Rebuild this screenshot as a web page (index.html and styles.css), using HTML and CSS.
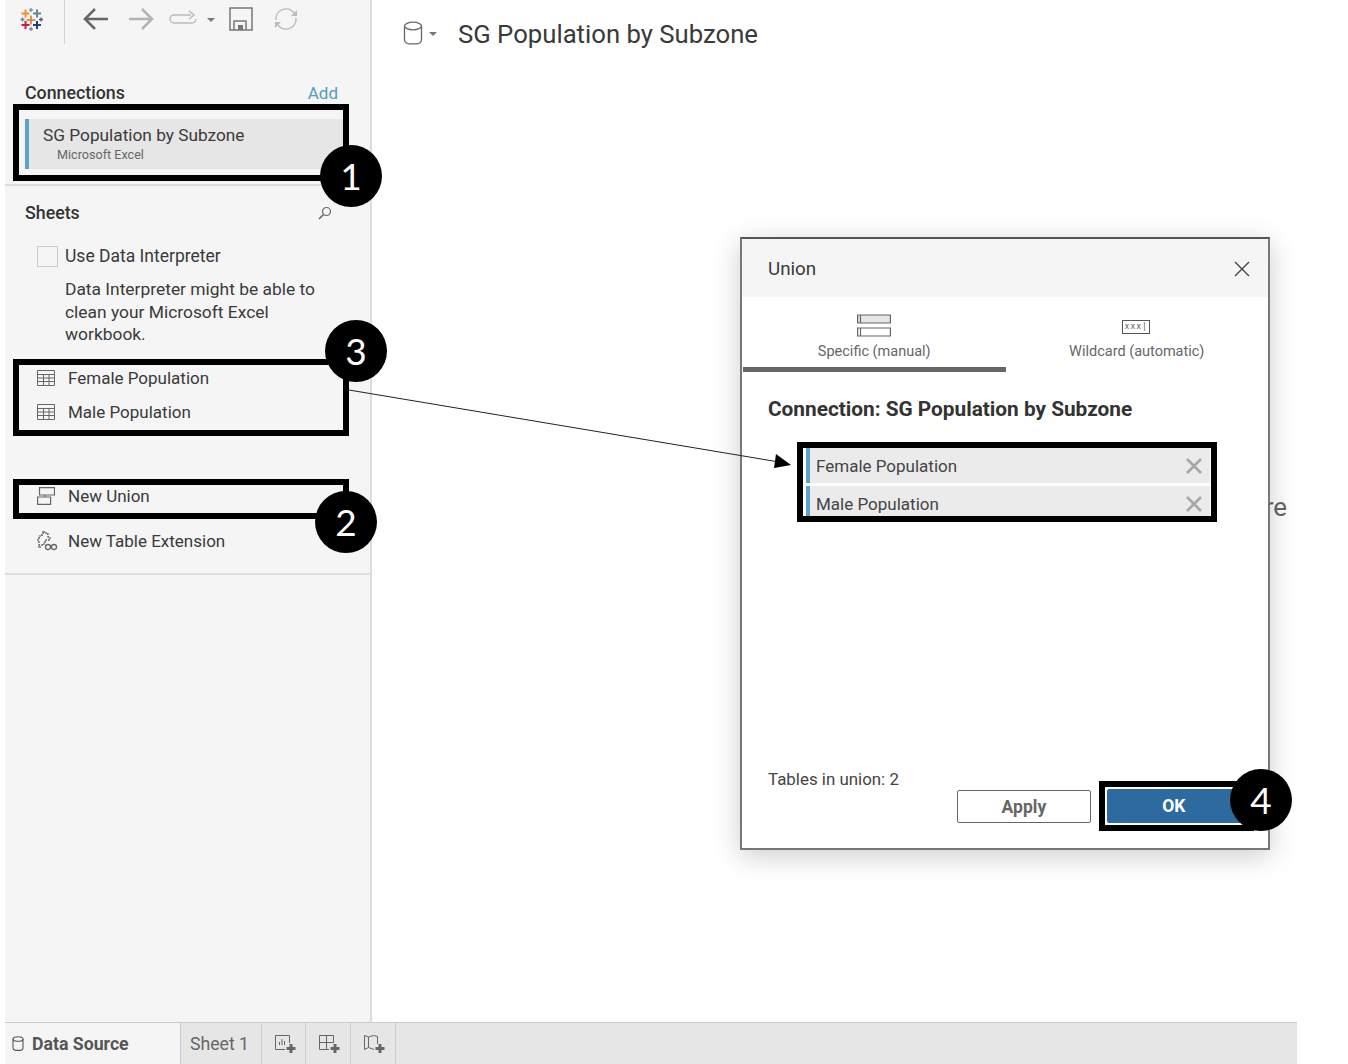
FILE: index.html
```html
<!DOCTYPE html>
<html lang="en">
<head>
    <meta charset="UTF-8">
    <meta name="viewport" content="width=device-width, initial-scale=1.0">
    <title>SG Population by Subzone</title>
    <link rel="stylesheet" href="styles.css">
</head>
<body>
    <div class="app">
        <div class="main">
            <!-- Left pane -->
            <aside class="sidebar">
                <div class="toolbar">
                    <svg class="logo" width="30" height="30" viewBox="0 0 30 30" fill="none" stroke-width="2">
                        <path d="M15 10.500v9M10.500 15h9" stroke="#e8762c" stroke-width="1.600"/>
                        <path d="M9.500 4.500v8M5.500 8.500h8" stroke="#f28e2b"/>
                        <path d="M21 4.500v8M17 8.500h8" stroke="#5b879b"/>
                        <path d="M9.500 16v8M5.500 20h8" stroke="#c72037"/>
                        <path d="M21 16v8M17 20h8" stroke="#1f447d"/>
                        <path d="M15 3v4M13 5h4" stroke="#7099a6" stroke-width="1.300"/>
                        <path d="M6.500 12.500v4M4.500 14.500h4" stroke="#5b879b" stroke-width="1.300"/>
                        <path d="M25 12.500v4M23 14.500h4" stroke="#59507f" stroke-width="1.300"/>
                        <path d="M15 22v4M13 24h4" stroke="#7b83b0" stroke-width="1.300"/>
                    </svg>
                    <span class="toolbar-divider"></span>
                    <svg class="tool-back" width="26" height="26" viewBox="0 0 26 26" fill="none" stroke="#666" stroke-width="2.500"><path d="M2 13h23M12 3L2 13l10 10"/></svg>
                    <svg class="tool-forward" width="26" height="26" viewBox="0 0 26 26" fill="none" stroke="#b3b3b3" stroke-width="2.500"><path d="M1 13h23M14 3l10 10-10 10"/></svg>
                    <svg class="tool-redo" width="30" height="20" viewBox="0 0 30 20" fill="none" stroke="#bbb" stroke-width="1.500"><path d="M22 6H5a4 4 0 0 0 0 8h18a4 4 0 0 0 4-4M20 2l5 4-5 4"/></svg>
                    <span class="caret"></span>
                    <svg class="tool-save" width="24" height="24" viewBox="0 0 24 24" fill="none" stroke="#777" stroke-width="1.500"><path d="M1 1h22v22H1zM5 23V14h12v9"/><path d="M9 18h5v5H9z" fill="#777" stroke="none"/></svg>
                    <svg class="tool-refresh" width="26" height="26" viewBox="0 0 26 26" fill="none" stroke="#bbb" stroke-width="1.500"><path d="M3 14a10 10 0 0 1 18-7M23 12a10 10 0 0 1-18 7"/><path d="M24 4v6h-6z" fill="#bbb" stroke="none"/><path d="M2 22v-6h6z" fill="#bbb" stroke="none"/></svg>
                </div>

                <div class="section-head connections-head">
                    <h2>Connections</h2>
                    <a class="add-link">Add</a>
                </div>
                <div class="connection">
                    <div class="connection-name">SG Population by Subzone</div>
                    <div class="connection-type">Microsoft Excel</div>
                </div>

                <div class="sheets">
                    <div class="section-head">
                        <h2>Sheets</h2>
                        <svg width="14" height="14" viewBox="0 0 14 14" fill="none" stroke="#666" stroke-width="1.200"><circle cx="8.500" cy="5.500" r="4"/><path d="M5.500 8.500L1 13" stroke-width="1.600"/></svg>
                    </div>
                    <div class="interpreter">
                        <span class="checkbox"></span>
                        <span>Use Data Interpreter</span>
                    </div>
                    <p class="interpreter-note">Data Interpreter might be able to clean your Microsoft Excel workbook.</p>
                    <ul class="sheet-list">
                        <li>
                            <svg width="18" height="16" viewBox="0 0 18 16" fill="none" stroke="#666"><path d="M.5.500h17v15H.5zM.5 4.500h17M.5 8h17M.5 11.500h17M6.500 4.500v11M12 4.500v11"/></svg>
                            Female Population
                        </li>
                        <li>
                            <svg width="18" height="16" viewBox="0 0 18 16" fill="none" stroke="#666"><path d="M.5.500h17v15H.5zM.5 4.500h17M.5 8h17M.5 11.500h17M6.500 4.500v11M12 4.500v11"/></svg>
                            Male Population
                        </li>
                    </ul>
                    <ul class="sheet-list sheet-actions">
                        <li>
                            <svg width="18" height="18" viewBox="0 0 18 18" fill="none" stroke="#666" stroke-width="1.200"><path d="M2.500.600h15v7.400h-15zM.6 10h13v7.400H.6zM8 8v2"/></svg>
                            New Union
                        </li>
                        <li class="extension">
                            <svg width="21" height="20" viewBox="0 0 21 20" fill="none" stroke="#666" stroke-width="1.300"><path d="M6 1h3v2h2v3h2v3H9v2H7v3H2v-3H1V7h2V4h3z" stroke-dasharray="2 1"/><circle cx="11" cy="16" r="2.500"/><circle cx="17" cy="16" r="2.500"/><path d="M1 16h3"/></svg>
                            New Table Extension
                        </li>
                    </ul>
                </div>
            </aside>

            <!-- Canvas -->
            <section class="canvas">
                <header class="canvas-head">
                    <svg class="db-icon" width="20" height="24" viewBox="0 0 20 24" fill="none" stroke="#666" stroke-width="1.300"><ellipse cx="10" cy="5" rx="8.500" ry="3.800"/><path d="M1.500 5v14c0 2.500 3 3.800 4 3.800h9c1 0 4-1.300 4-3.800V5"/></svg>
                    <span class="caret"></span>
                    <h1>SG Population by Subzone</h1>
                </header>
                <span class="drop-hint">Drag tables here</span>
            </section>
        </div>

        <!-- Sheet tabs -->
        <footer class="tabs">
            <div class="tab tab-source">
                <svg width="12" height="15" viewBox="0 0 12 15" fill="none" stroke="#555" stroke-width="1.100"><ellipse cx="6" cy="3" rx="5" ry="2.300"/><path d="M1 3v9c0 1.500 2 2.400 2.500 2.400h5c.5 0 2.500-.900 2.500-2.400V3"/></svg>
                Data Source
            </div>
            <div class="tab tab-sheet">Sheet 1</div>
            <div class="tab tab-icon tab-icon-first">
                <svg width="22" height="20" viewBox="0 0 22 20" fill="none" stroke="#666"><path d="M11 15.500H1.500v-14h14V9M5.500 11V8M8 11V5M10.500 11V7"/><path d="M17 10v9M12.500 14.500h9" stroke-width="3"/></svg>
            </div>
            <div class="tab tab-icon">
                <svg width="22" height="20" viewBox="0 0 22 20" fill="none" stroke="#666"><path d="M11 15.500H1.500v-14h14V9M8.500 1.500v14M1.500 8.500h14"/><path d="M17 10v9M12.500 14.500h9" stroke-width="3"/></svg>
            </div>
            <div class="tab tab-icon">
                <svg width="22" height="20" viewBox="0 0 22 20" fill="none" stroke="#666"><path d="M11 15.500L5.500 13.500 1.500 15.500v-14l4 1.500 5-1.500 4 1v7.500M5.500 3v10.500"/><path d="M17 10v9M12.500 14.500h9" stroke-width="3"/></svg>
            </div>
        </footer>

        <!-- Union dialog -->
        <div class="dialog">
            <div class="dialog-head">
                <span>Union</span>
                <svg width="16" height="16" viewBox="0 0 16 16" stroke="#444" stroke-width="1.400"><path d="M1 1l14 14M15 1L1 15"/></svg>
            </div>
            <div class="dialog-tabs">
                <div class="dialog-tab active">
                    <svg width="34" height="24" viewBox="0 0 34 24" fill="none" stroke="#666" stroke-width="1.200"><path d="M.6 1h32.800v8H.6z" fill="#e6e6e6"/><path d="M.6 14h32.800v8H.6zM3.500 1v8M3.500 14v8"/></svg>
                    <span>Specific (manual)</span>
                </div>
                <div class="dialog-tab">
                    <div class="wildcard-icon">xxx|</div>
                    <span>Wildcard (automatic)</span>
                </div>
            </div>
            <h3 class="dialog-title">Connection: SG Population by Subzone</h3>
            <div class="union-list">
                <div class="union-row">
                    <span>Female Population</span>
                    <svg width="16" height="16" viewBox="0 0 16 16" stroke="#a6a6a6" stroke-width="2.600"><path d="M1 1l14 14M15 1L1 15"/></svg>
                </div>
                <div class="union-row">
                    <span>Male Population</span>
                    <svg width="16" height="16" viewBox="0 0 16 16" stroke="#a6a6a6" stroke-width="2.600"><path d="M1 1l14 14M15 1L1 15"/></svg>
                </div>
            </div>
            <div class="dialog-foot">
                <span class="union-count">Tables in union: 2</span>
                <button class="btn">Apply</button>
                <button class="btn btn-primary">OK</button>
            </div>
        </div>

        <!-- Tutorial annotations drawn on top of the screenshot -->
        <div class="mark mark-connection"></div>
        <div class="mark mark-sheets"></div>
        <div class="mark mark-union"></div>
        <div class="mark mark-rows"></div>
        <div class="mark mark-ok"></div>
        <svg class="arrow" width="450" height="90" viewBox="0 0 450 90" fill="none">
            <path d="M0 1L430 73" stroke="#222" stroke-width="1"/>
            <path d="M442 76L427 65 425 79z" fill="#000"/>
        </svg>
        <div class="step step-1">1</div>
        <div class="step step-2">2</div>
        <div class="step step-3">3</div>
        <div class="step step-4">4</div>
    </div>
</body>
</html>
```

FILE: styles.css
```css
* {
    box-sizing: border-box;
}
body {
    margin: 0;
    background-color: #fff;
    font-family: Roboto, "Liberation Sans", sans-serif;
    color: #3a3a3a;
}
h1, h2, h3, p, ul {
    margin: 0;
    padding: 0;
}
ul {
    list-style: none;
}
svg {
    display: block;
    flex: none;
}
.app {
    position: relative;
    width: 1348px;
    height: 1064px;
    padding-left: 5px;
    overflow: hidden;
    display: flex;
    flex-direction: column;
}
.main {
    height: 1022px;
    display: flex;
}

/* Left pane */
.sidebar {
    width: 367px;
    background-color: #f5f5f5;
    border-right: 2px solid #ddd;
}
.toolbar {
    height: 45px;
    display: flex;
    align-items: flex-start;
}
.logo {
    margin: 5px 0 0 11px;
}
.toolbar-divider {
    width: 1px;
    height: 44px;
    margin-left: 18px;
    background-color: #d4d4d4;
}
.tool-back {
    margin: 6px 0 0 18px;
}
.tool-forward {
    margin: 6px 0 0 19px;
}
.tool-redo {
    margin: 9px 0 0 15px;
}
.toolbar .caret {
    margin: 18px 0 0 8px;
}
.tool-save {
    margin: 7px 0 0 14px;
}
.tool-refresh {
    margin: 6px 0 0 20px;
}
.caret {
    width: 0;
    height: 0;
    border-left: 4px solid transparent;
    border-right: 4px solid transparent;
    border-top: 4px solid #777;
}
.section-head {
    display: flex;
    justify-content: space-between;
    align-items: center;
    padding: 0 32px 0 20px;
}
.section-head h2 {
    font-size: 17.800px;
    font-weight: 500;
    color: #333;
}
.connections-head {
    height: 24px;
    margin-top: 35px;
}
.add-link {
    margin-top: 2px;
    font-size: 17px;
    color: #4f9fc4;
}
.connection {
    height: 50px;
    margin: 15px 25px 0 20px;
    padding: 6px 0 0 14px;
    background-color: #e6e6e6;
    border-left: 4px solid #5ba4c9;
}
.connection-name {
    font-size: 17.250px;
    line-height: 21px;
}
.connection-type {
    margin: 1px 0 0 14px;
    font-size: 12.600px;
    line-height: 16px;
    color: #666;
}
.sheets {
    height: 391px;
    margin-top: 15px;
    padding-top: 16px;
    border-top: 2px solid #ddd;
    border-bottom: 2px solid #ddd;
}
.sheets .section-head h2 {
    line-height: 22px;
}
.sheets .section-head {
    padding-right: 38px;
}
.interpreter {
    display: flex;
    align-items: center;
    gap: 7px;
    margin: 21px 0 0 32px;
    font-size: 17.500px;
    line-height: 22px;
}
.checkbox {
    width: 21px;
    height: 21px;
    border: 1px solid #ccc;
}
.interpreter-note {
    width: 280px;
    margin: 11px 0 0 60px;
    font-size: 17.400px;
    line-height: 22.500px;
}
.sheet-list {
    margin: 15px 0 0 32px;
    font-size: 17px;
}
.sheet-list li {
    height: 34px;
    display: flex;
    align-items: center;
    gap: 13px;
}
.sheet-actions {
    margin-top: 50px;
}
.sheet-actions .extension {
    margin-top: 11px;
}
.sheet-actions .extension svg {
    margin-right: -3px;
}

/* Canvas */
.canvas {
    position: relative;
    flex: 1;
}
.canvas-head {
    height: 68px;
    display: flex;
    align-items: center;
    padding-left: 31px;
}
.db-icon {
    margin-top: -2px;
}
.canvas-head .caret {
    margin-left: 6px;
}
.canvas-head h1 {
    margin-left: 21px;
    font-size: 25.700px;
    font-weight: 400;
    color: #3a3a3a;
}
.drop-hint {
    position: absolute;
    right: 61px;
    top: 492px;
    font-size: 26px;
    color: #666;
}

/* Sheet tabs */
.tabs {
    width: 1292px;
    height: 42px;
    display: flex;
    background-color: #e6e6e6;
    border-top: 1px solid #ccc;
}
.tab {
    display: flex;
    align-items: center;
    border-right: 1px solid #ccc;
}
.tab-source {
    width: 176px;
    gap: 8px;
    padding-left: 7px;
    background-color: #f5f5f5;
    font-size: 17.700px;
    font-weight: 700;
    color: #555;
}
.tab-sheet {
    width: 81px;
    padding-right: 3px;
    justify-content: center;
    font-size: 17.700px;
    color: #666;
}
.tab-icon {
    width: 45px;
    padding-left: 2px;
    justify-content: center;
}
.tab-icon-first {
    width: 44px;
}

/* Union dialog */
.dialog {
    position: absolute;
    left: 740px;
    top: 237px;
    width: 530px;
    height: 613px;
    background-color: #fff;
    border: 2px solid #777;
    border-top-color: #555;
    box-shadow: 0 6px 26px rgba(0, 0, 0, .2);
    display: flex;
    flex-direction: column;
}
.dialog-head {
    height: 58px;
    flex: none;
    display: flex;
    justify-content: space-between;
    align-items: center;
    padding: 1px 18px 0 26px;
    background-color: #f5f5f5;
    font-size: 18.800px;
}
.dialog-tabs {
    height: 75px;
    flex: none;
    display: flex;
    margin-left: 1px;
}
.dialog-tab {
    width: 263px;
    display: flex;
    flex-direction: column;
    align-items: center;
    justify-content: flex-end;
    padding-bottom: 11px;
    font-size: 14.500px;
    line-height: 18px;
    color: #666;
}
.dialog-tab svg {
    margin-bottom: 5px;
}
.dialog-tab.active {
    border-bottom: 5px solid #666;
    padding-bottom: 6px;
}
.wildcard-icon {
    width: 28px;
    height: 14px;
    margin: 0 1px 9px 0;
    border: 1px solid #555;
    font-family: "DejaVu Sans Mono", monospace;
    font-size: 8px;
    line-height: 12px;
    letter-spacing: 1px;
    text-align: center;
    color: #555;
}
.dialog-title {
    margin: 24px 0 0 26px;
    font-size: 20.800px;
    font-weight: 700;
    line-height: 26px;
    color: #333;
}
.union-list {
    height: 69px;
    flex: none;
    margin: 26px 0 0 64px;
    width: 404px;
    overflow: hidden;
}
.union-row {
    height: 35px;
    margin-bottom: 3px;
    display: flex;
    justify-content: space-between;
    align-items: center;
    padding: 0 8px 0 6px;
    background-color: #ebebeb;
    border-left: 4px solid #5ba4c9;
    font-size: 17px;
    color: #444;
}
.dialog-foot {
    flex: 1;
    display: flex;
    align-items: flex-start;
    padding: 252px 0 0 26px;
}
.union-count {
    margin-right: 58px;
    font-size: 16.900px;
    line-height: 20px;
    color: #444;
}
.btn {
    width: 134px;
    height: 33px;
    margin-top: 21px;
    padding: 0;
    background-color: #fff;
    border: 1px solid #666;
    border-radius: 2px;
    font-family: inherit;
    font-size: 17.500px;
    font-weight: 700;
    color: #666;
}
.btn-primary {
    margin-left: 16px;
    margin-top: 20px;
    height: 34px;
    background-color: #2d6a9f;
    border-color: #2d6a9f;
    color: #fff;
}

/* Tutorial annotations */
.mark {
    position: absolute;
    border: 6px solid #000;
}
.mark-connection {
    left: 13px;
    top: 104px;
    width: 336px;
    height: 77px;
}
.mark-sheets {
    left: 13px;
    top: 359px;
    width: 336px;
    height: 77px;
}
.mark-union {
    left: 13px;
    top: 479px;
    width: 336px;
    height: 40px;
}
.mark-rows {
    left: 797px;
    top: 442px;
    width: 420px;
    height: 80px;
}
.mark-ok {
    left: 1099px;
    top: 781px;
    width: 155px;
    height: 50px;
}
.arrow {
    position: absolute;
    left: 349px;
    top: 389px;
}
.step {
    position: absolute;
    width: 62px;
    height: 62px;
    border-radius: 50%;
    background-color: #000;
    color: #fff;
    font-family: Lato, sans-serif;
    font-size: 37px;
    line-height: 62px;
    text-align: center;
}
.step-1 {
    left: 320px;
    top: 145px;
}
.step-2 {
    left: 315px;
    top: 491px;
}
.step-3 {
    left: 325px;
    top: 320px;
}
.step-4 {
    left: 1230px;
    top: 769px;
}
```
